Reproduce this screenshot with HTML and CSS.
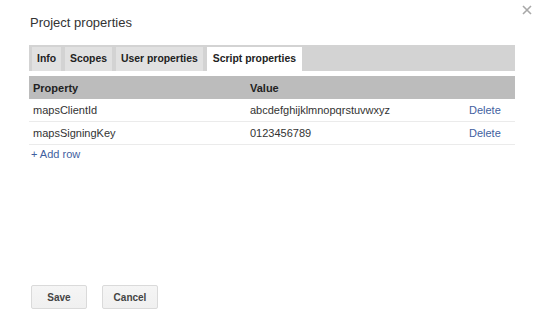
FILE: index.html
```html
<!doctype html>
<html lang="en">
  <head>
    <meta charset="utf-8" />
    <meta name="viewport" content="width=device-width, initial-scale=1" />
    <title>Project properties</title>
    <link rel="stylesheet" href="styles.css">
  </head>
  <body>
    <div class="dialog">
      <button class="close" aria-label="Close">
        <svg width="10" height="10" viewBox="0 0 10 10" fill="none" stroke="currentColor" stroke-width="1.6">
          <path d="M1 1l8 8M9 1l-8 8" />
        </svg>
      </button>

      <h1 class="title">Project properties</h1>

      <div class="tabs">
        <span class="tab">Info</span>
        <span class="tab">Scopes</span>
        <span class="tab">User properties</span>
        <span class="tab active">Script properties</span>
      </div>

      <table class="props">
        <thead>
          <tr>
            <th class="col-name">Property</th>
            <th>Value</th>
            <th class="col-action"></th>
          </tr>
        </thead>
        <tbody>
          <tr>
            <td>mapsClientId</td>
            <td>abcdefghijklmnopqrstuvwxyz</td>
            <td class="col-action"><a href="#">Delete</a></td>
          </tr>
          <tr>
            <td>mapsSigningKey</td>
            <td>0123456789</td>
            <td class="col-action"><a href="#">Delete</a></td>
          </tr>
        </tbody>
      </table>
      <a class="add-row" href="#">+ Add row</a>

      <div class="footer">
        <button class="btn">Save</button>
        <button class="btn">Cancel</button>
      </div>
    </div>
  </body>
</html>
```

FILE: styles.css
```css
body {
  margin: 0;
  padding: 0;
  background: #ffffff;
  font-family: 'Liberation Sans', Arial, sans-serif;
  color: #222222;
}

.dialog {
  position: relative;
  min-height: 324px;
  box-sizing: border-box;
  padding: 0 25px 0 29px;
  display: flex;
  flex-direction: column;
}

.close {
  position: absolute;
  top: 3px;
  right: 6px;
  background: none;
  border: none;
  padding: 2px;
  color: #a8a8a8;
  display: flex;
}

.title {
  margin: 14px 0 0 1px;
  font-size: 13px;
  font-weight: normal;
  color: #333333;
  line-height: 18px;
}

.tabs {
  margin-top: 13px;
  height: 26px;
  box-sizing: border-box;
  padding: 2px 0 0 3px;
  background: #d3d3d3;
  display: flex;
  align-items: flex-end;
  gap: 4px;
}

.tab {
  height: 24px;
  line-height: 24px;
  padding: 0 5px;
  font-size: 10.4px;
  font-weight: bold;
  color: #222222;
  background: #e1e1e1;
}

.tab.active {
  background: #ffffff;
  padding: 0 6px;
}

.props {
  margin-top: 5px;
  width: 100%;
  border-collapse: collapse;
  font-size: 11px;
}

.props th {
  background: #bcbcbc;
  text-align: left;
  font-weight: bold;
  height: 23px;
  padding: 0 4px;
  color: #222222;
}

.props td {
  height: 22px;
  padding: 0 4px;
  border-bottom: 1px solid #ebebeb;
  color: #333333;
}

.props .col-name {
  width: 209px;
}

.props .col-action {
  width: 32px;
  padding-right: 14px;
}

.props a,
.add-row {
  color: #3f5f9f;
  text-decoration: none;
}

.add-row {
  margin: 3px 0 0 2px;
  font-size: 11px;
  align-self: flex-start;
}

.footer {
  margin-top: auto;
  padding: 0 0 15px 2px;
  display: flex;
  gap: 15px;
}

.btn {
  width: 56px;
  height: 24px;
  font-family: 'Liberation Sans', Arial, sans-serif;
  font-size: 10px;
  font-weight: bold;
  color: #444444;
  background: linear-gradient(#f5f5f5, #f0f0f0);
  border: 1px solid #dadada;
  border-radius: 2px;
  padding: 0;
}
```
